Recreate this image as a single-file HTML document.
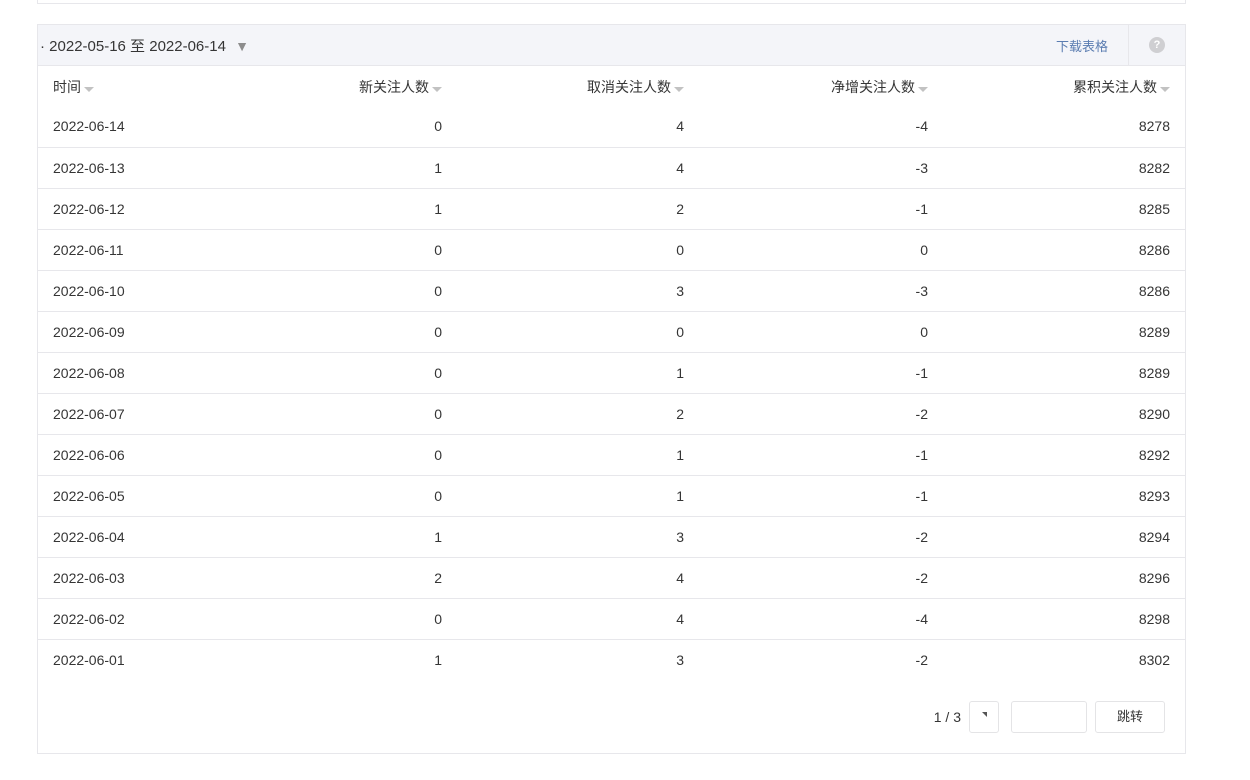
<!DOCTYPE html>
<html><head><meta charset="utf-8"><style>
*{margin:0;padding:0;box-sizing:border-box}
body{width:1250px;height:780px;background:#fff;font-family:"Liberation Sans","Noto Sans CJK SC",sans-serif;font-size:14px;color:#353535;position:relative;overflow:hidden}
.top{position:absolute;left:37px;top:-10px;width:1149px;height:14px;border:1px solid #e7e7eb}
.box{position:absolute;left:37px;top:24px;width:1149px;height:730px;border:1px solid #e7e7eb}
.hd{height:41px;background:#f4f5f9;border-bottom:1px solid #e7e7eb;position:relative}
.hd .d{position:absolute;left:2px;top:10px;font-size:15px;color:#353535}
.hd .d .tri{color:#8d8d8d;font-size:14px;margin-left:5px}
.hd .dl{position:absolute;right:77px;top:11px;color:#5b7db1;font-size:13px}
.hd .q{position:absolute;right:0;top:0;width:57px;height:40px;border-left:1px solid #e7e7eb}
.hd .q span{position:absolute;left:20px;top:12px;width:16px;height:16px;border-radius:50%;background:#cfcfd2;color:#fff;font-size:11px;font-weight:bold;text-align:center;line-height:16px}
table{border-collapse:collapse;width:1147px;table-layout:fixed}
td,th{height:41px;font-weight:normal;font-size:14px;padding:0 15px 0 15px;text-align:right;white-space:nowrap}
th{font-size:14px;color:#353535;height:40px;padding-top:2px}
td{border-bottom:1px solid #e7e7eb}
tr:last-child td{border-bottom:none}
td:first-child,th:first-child{text-align:left}
.ar{display:inline-block;width:0;height:0;border-left:5px solid transparent;border-right:5px solid transparent;border-top:5px solid #c2c2c2;margin-left:3px;vertical-align:middle;position:relative;top:1px}
.pg{position:absolute;top:701px;right:85px;display:flex;align-items:center;color:#353535}
.pg .b{width:30px;height:32px;border:1px solid #e4e4e6;border-radius:3px;margin-left:8px;position:relative}
.pg .b:after{content:"";position:absolute;left:12px;top:10px;border-top:5px solid #555;border-left:5px solid transparent}
.pg .i{width:76px;height:32px;border:1px solid #e4e4e6;border-radius:3px;margin-left:12px}
.pg .j{width:70px;height:32px;border:1px solid #e4e4e6;border-radius:3px;margin-left:8px;text-align:center;line-height:30px;font-size:13px}
</style></head><body>
<div class="top"></div>
<div class="box">
<div class="hd"><div class="d">· 2022-05-16 至 2022-06-14 <span class="tri">▼</span></div><div class="dl">下载表格</div><div class="q"><span>?</span></div></div>
<table>
<colgroup><col style="width:180px"><col style="width:239px"><col style="width:242px"><col style="width:244px"><col style="width:242px"></colgroup>
<tr><th>时间<i class="ar"></i></th><th>新关注人数<i class="ar"></i></th><th>取消关注人数<i class="ar"></i></th><th>净增关注人数<i class="ar"></i></th><th>累积关注人数<i class="ar"></i></th></tr>
<tr><td>2022-06-14</td><td>0</td><td>4</td><td>-4</td><td>8278</td></tr>
<tr><td>2022-06-13</td><td>1</td><td>4</td><td>-3</td><td>8282</td></tr>
<tr><td>2022-06-12</td><td>1</td><td>2</td><td>-1</td><td>8285</td></tr>
<tr><td>2022-06-11</td><td>0</td><td>0</td><td>0</td><td>8286</td></tr>
<tr><td>2022-06-10</td><td>0</td><td>3</td><td>-3</td><td>8286</td></tr>
<tr><td>2022-06-09</td><td>0</td><td>0</td><td>0</td><td>8289</td></tr>
<tr><td>2022-06-08</td><td>0</td><td>1</td><td>-1</td><td>8289</td></tr>
<tr><td>2022-06-07</td><td>0</td><td>2</td><td>-2</td><td>8290</td></tr>
<tr><td>2022-06-06</td><td>0</td><td>1</td><td>-1</td><td>8292</td></tr>
<tr><td>2022-06-05</td><td>0</td><td>1</td><td>-1</td><td>8293</td></tr>
<tr><td>2022-06-04</td><td>1</td><td>3</td><td>-2</td><td>8294</td></tr>
<tr><td>2022-06-03</td><td>2</td><td>4</td><td>-2</td><td>8296</td></tr>
<tr><td>2022-06-02</td><td>0</td><td>4</td><td>-4</td><td>8298</td></tr>
<tr><td>2022-06-01</td><td>1</td><td>3</td><td>-2</td><td>8302</td></tr>
</table>
</div>
<div class="pg"><span>1 / 3</span><div class="b"></div><div class="i"></div><div class="j">跳转</div></div>
</body></html>
